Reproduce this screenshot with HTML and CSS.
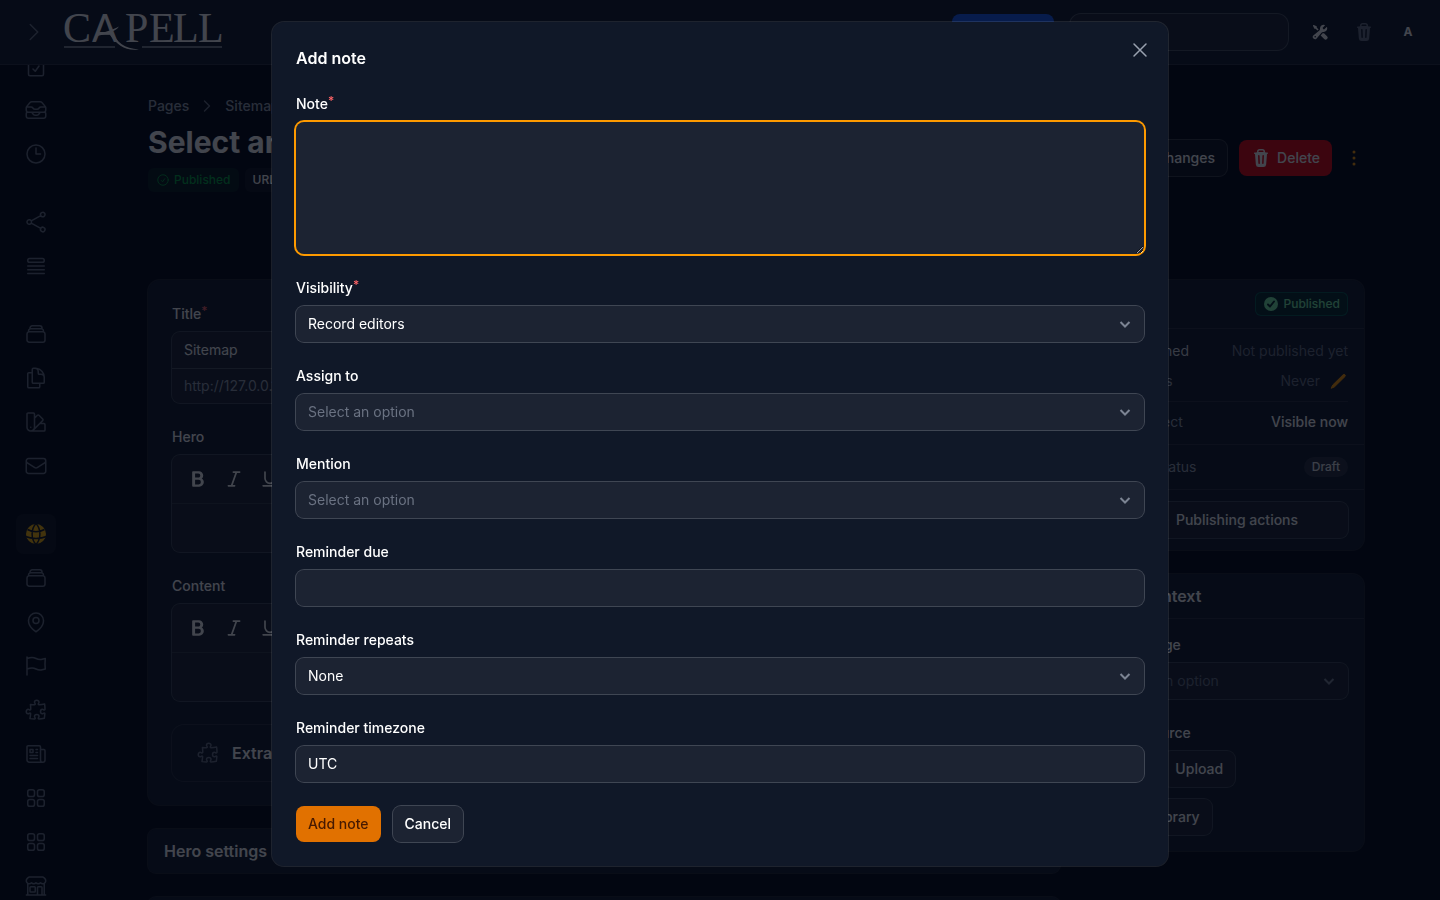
FILE: index.html
```html
<!DOCTYPE html>
<html lang="en">
<head>
<meta charset="utf-8">
<meta name="viewport" content="width=device-width, initial-scale=1">
<title>Add note - Capell</title>
<link rel="stylesheet" href="styles.css">
</head>
<body>
<svg class="sprite" aria-hidden="true">
  <symbol id="i-stack" viewBox="0 0 24 24"><path d="M6 6.878V6a2.25 2.25 0 0 1 2.25-2.25h7.5A2.25 2.25 0 0 1 18 6v.878m-12 0c.235-.083.487-.128.75-.128h10.5c.263 0 .515.045.75.128m-12 0A2.25 2.25 0 0 0 4.5 9v.878m13.5-3A2.25 2.25 0 0 1 19.5 9v.878m0 0a2.246 2.246 0 0 0-.75-.128H5.25c-.263 0-.515.045-.75.128m15 0A2.25 2.25 0 0 1 21 12v6a2.25 2.25 0 0 1-2.25 2.25H5.25A2.25 2.25 0 0 1 3 18v-6c0-.98.626-1.813 1.5-2.122"/></symbol>
  <symbol id="i-puzzle" viewBox="0 0 24 24"><path d="M14.25 6.087c0-.355.186-.676.401-.959.221-.29.349-.634.349-1.003 0-1.036-1.007-1.875-2.25-1.875s-2.25.84-2.25 1.875c0 .369.128.713.349 1.003.215.283.401.604.401.959v0a.64.64 0 0 1-.657.643 48.39 48.39 0 0 1-4.163-.3c.186 1.613.293 3.25.315 4.907a.656.656 0 0 1-.658.663v0c-.355 0-.676-.186-.959-.401a1.647 1.647 0 0 0-1.003-.349c-1.036 0-1.875 1.007-1.875 2.25s.84 2.25 1.875 2.25c.369 0 .713-.128 1.003-.349.283-.215.604-.401.959-.401v0c.31 0 .555.26.532.57a48.039 48.039 0 0 1-.642 5.056c1.518.19 3.058.309 4.616.354a.64.64 0 0 0 .657-.643v0c0-.355-.186-.676-.401-.959a1.647 1.647 0 0 1-.349-1.003c0-1.035 1.008-1.875 2.25-1.875 1.243 0 2.25.84 2.25 1.875 0 .369-.128.713-.349 1.003-.215.283-.4.604-.4.959v0c0 .333.277.599.61.58a48.1 48.1 0 0 0 5.427-.63 48.05 48.05 0 0 0 .582-4.717.532.532 0 0 0-.533-.57v0c-.355 0-.676.186-.959.401-.29.221-.634.349-1.003.349-1.035 0-1.875-1.007-1.875-2.25s.84-2.25 1.875-2.25c.37 0 .713.128 1.003.349.283.215.604.401.96.401v0a.656.656 0 0 0 .658-.663 48.422 48.422 0 0 0-.37-5.36c-1.886.342-3.81.574-5.766.689a.578.578 0 0 1-.61-.58v0Z"/></symbol>
  <symbol id="i-squares" viewBox="0 0 24 24"><rect x="3.75" y="3.75" width="6.75" height="6.75" rx="2.1"/><rect x="13.5" y="3.75" width="6.75" height="6.75" rx="2.1"/><rect x="3.75" y="13.5" width="6.75" height="6.75" rx="2.1"/><rect x="13.5" y="13.5" width="6.75" height="6.75" rx="2.1"/></symbol>
  <symbol id="i-bold" viewBox="0 0 24 24"><path d="M6.75 3.744h-.753v8.25h7.125a4.125 4.125 0 0 0 0-8.25H6.75Zm0 0v.38m0 16.122h6.747a4.5 4.5 0 0 0 0-9.001h-7.5v9h.753Zm0 0v-.37m0-15.751h6a3.75 3.75 0 1 1 0 7.5h-6m0-7.5v7.5m0 0v8.25m0-8.25h6.375a4.125 4.125 0 0 1 0 8.25H6.75m.747-15.38h4.875a3.375 3.375 0 0 1 0 6.75H7.497v-6.75Zm0 7.5h5.25a3.75 3.75 0 0 1 0 7.5h-5.25v-7.5Z"/></symbol>
  <symbol id="i-italic" viewBox="0 0 24 24"><path d="M5.248 20.246H9.05m0 0h3.696m-3.696 0 5.893-16.502m0 0h-3.697m3.697 0h3.803"/></symbol>
  <symbol id="i-underline" viewBox="0 0 24 24"><path d="M17.995 3.744v7.5a6 6 0 1 1-12 0v-7.5m-2.25 16.502h16.5"/></symbol>
  <symbol id="i-right" viewBox="0 0 24 24"><path d="m8.25 4.5 7.5 7.5-7.5 7.5"/></symbol>
  <symbol id="i-down" viewBox="0 0 16 16"><path d="m3.500 6 4.500 4.500L12.500 6"/></symbol>
  <symbol id="i-trash" viewBox="0 0 20 20"><path fill-rule="evenodd" d="M8.75 1A2.75 2.75 0 0 0 6 3.75v.443c-.795.077-1.584.176-2.365.298a.75.75 0 1 0 .23 1.482l.149-.022.841 10.518A2.75 2.75 0 0 0 7.596 19h4.807a2.75 2.75 0 0 0 2.742-2.53l.841-10.52.149.023a.75.75 0 0 0 .23-1.482A41.03 41.03 0 0 0 14 4.193V3.75A2.75 2.75 0 0 0 11.25 1h-2.5ZM10 4c.84 0 1.673.025 2.5.075V3.75c0-.69-.56-1.25-1.25-1.25h-2.5c-.69 0-1.25.56-1.25 1.25v.325C8.327 4.025 9.16 4 10 4ZM8.58 7.72a.75.75 0 0 0-1.5.06l.3 7.5a.75.75 0 1 0 1.5-.06l-.3-7.5Zm4.34.06a.75.75 0 1 0-1.5-.06l-.3 7.5a.75.75 0 1 0 1.5.06l.3-7.5Z"/></symbol>
  <symbol id="i-clock" viewBox="0 0 24 24"><path d="M12 6v6h4.5m4.5 0a9 9 0 1 1-18 0 9 9 0 0 1 18 0Z"/></symbol>
</svg>

<div class="app">
  <header class="topbar">
    <button class="topbar-toggle" type="button" aria-label="Expand sidebar"><svg class="icon"><use href="#i-right"/></svg></button>
    <a class="brand" href="#" aria-label="Capell">
      <svg class="logo" viewBox="0 0 160 40">
        <text class="logo-text" y="30"><tspan x="-1">C</tspan><tspan class="logo-a" x="28">A</tspan><tspan x="61 85 109 134">PELL</tspan></text>
        <path class="logo-mark" d="M31 24.500C38 20 47 19 55 14.500 51 20 43 21.500 31 24.500zM48 20c5 10 12 16.500 27 17.500C62 39.500 53 33 46 23z"/>
        <path class="logo-rule" d="M0 35h51M78 35h80"/>
      </svg>
    </a>
    <div class="topbar-end">
      <button class="btn btn-blue" type="button">View page</button>
      <input class="search" type="search" aria-label="Global search">
      <button class="icon-btn tools" type="button" aria-label="Tools"><svg viewBox="0 0 20 20"><path fill-rule="evenodd" d="M14.5 10a4.500 4.500 0 0 0 4.284-5.882c-.105-.324-.51-.391-.752-.15L15.340 6.660a.454.454 0 0 1-.493.11 3.010 3.010 0 0 1-1.618-1.616.455.455 0 0 1 .11-.494l2.694-2.692c.24-.241.174-.647-.15-.752a4.500 4.500 0 0 0-5.873 4.575c.055.873-.128 1.808-.8 2.368l-7.230 6.024a2.724 2.724 0 1 0 3.837 3.837l6.024-7.230c.56-.672 1.495-.855 2.368-.8.096.007.193.01.291.01ZM5 16a1 1 0 1 1-2 0 1 1 0 0 1 2 0Z"/><path d="M14.5 11.500c.173 0 .345-.007.514-.022l3.754 3.754a2.500 2.500 0 0 1-3.536 3.536l-4.410-4.410 2.172-2.607c.052-.063.147-.138.342-.196.202-.06.469-.087.777-.067.128.008.257.012.387.012ZM6 4.586l2.330 2.330a.452.452 0 0 1-.08.09L6.800 8.214 4.586 6H3.309a.5.5 0 0 1-.447-.276l-1.700-3.402a.5.5 0 0 1 .093-.577l.49-.49a.5.5 0 0 1 .577-.094l3.402 1.700A.5.5 0 0 1 6 3.310v1.277Z"/></svg></button>
      <button class="icon-btn bin" type="button" aria-label="Trash"><svg><use href="#i-trash"/></svg></button>
      <button class="icon-btn avatar" type="button">A</button>
    </div>
  </header>

  <div class="shell">
    <nav class="sidebar" aria-label="Main">
      <ul class="nav-group">
        <li><a href="#" aria-label="Tasks"><svg class="icon" viewBox="0 0 24 24"><path d="M6 4.500h12a1.500 1.500 0 0 1 1.500 1.500v14.250a1.500 1.500 0 0 1-1.500 1.500H6a1.500 1.500 0 0 1-1.500-1.500V6A1.500 1.500 0 0 1 6 4.500ZM9 15l2.250 2.250L15 12"/></svg></a></li>
        <li><a href="#" aria-label="Inbox"><svg class="icon" viewBox="0 0 24 24"><path d="m7.875 14.250 1.214 1.942a2.250 2.250 0 0 0 1.908 1.058h2.006c.776 0 1.497-.4 1.908-1.058l1.214-1.942M2.410 9h4.636a2.250 2.250 0 0 1 1.872 1.002l.164.246a2.250 2.250 0 0 0 1.872 1.002h2.092a2.250 2.250 0 0 0 1.872-1.002l.164-.246A2.250 2.250 0 0 1 16.954 9h4.636M2.410 9a2.250 2.250 0 0 0-.16.832V12a2.250 2.250 0 0 0 2.250 2.250h15A2.250 2.250 0 0 0 21.750 12V9.832c0-.287-.055-.57-.16-.832M2.410 9a2.250 2.250 0 0 1 .382-.632l3.285-3.832a2.250 2.250 0 0 1 1.708-.786h8.430c.657 0 1.281.287 1.709.786l3.284 3.832c.163.19.291.404.382.632M4.500 20.250h15A2.250 2.250 0 0 0 21.750 18v-2.625c0-.621-.504-1.125-1.125-1.125H3.375c-.621 0-1.125.504-1.125 1.125V18a2.250 2.250 0 0 0 2.250 2.250Z"/></svg></a></li>
        <li><a href="#" aria-label="History"><svg class="icon"><use href="#i-clock"/></svg></a></li>
      </ul>
      <ul class="nav-group">
        <li><a href="#" aria-label="Share"><svg class="icon" viewBox="0 0 24 24"><path d="M7.217 10.907a2.250 2.250 0 1 0 0 2.186m0-2.186c.18.324.283.696.283 1.093s-.103.77-.283 1.093m0-2.186 9.566-5.314m-9.566 7.500 9.566 5.314m0 0a2.250 2.250 0 1 0 3.935 2.186 2.250 2.250 0 0 0-3.935-2.186Zm0-12.814a2.250 2.250 0 1 0 3.933-2.185 2.250 2.250 0 0 0-3.933 2.185Z"/></svg></a></li>
        <li><a href="#" aria-label="Queue"><svg class="icon" viewBox="0 0 24 24"><path d="M3.750 12h16.500m-16.500 3.750h16.500M3.750 19.500h16.500M5.625 4.500h12.750a1.875 1.875 0 0 1 0 3.750H5.625a1.875 1.875 0 0 1 0-3.750Z"/></svg></a></li>
      </ul>
      <ul class="nav-group">
        <li><a href="#" aria-label="Collections"><svg class="icon"><use href="#i-stack"/></svg></a></li>
        <li><a href="#" aria-label="Documents"><svg class="icon" viewBox="0 0 24 24"><path d="M15.750 17.250v3.375c0 .621-.504 1.125-1.125 1.125h-9.750a1.125 1.125 0 0 1-1.125-1.125V7.875c0-.621.504-1.125 1.125-1.125H6.750a9.060 9.060 0 0 1 1.500.124m7.500 10.376h3.375c.621 0 1.125-.504 1.125-1.125V11.250c0-4.460-3.243-8.161-7.500-8.876a9.060 9.060 0 0 0-1.500-.124H9.375c-.621 0-1.125.504-1.125 1.125v3.500m7.500 10.375H9.375a1.125 1.125 0 0 1-1.125-1.125v-9.250m12 6.625v-1.875a3.375 3.375 0 0 0-3.375-3.375h-1.500a1.125 1.125 0 0 1-1.125-1.125v-1.500a3.375 3.375 0 0 0-3.375-3.375H9.750"/></svg></a></li>
        <li><a href="#" aria-label="Themes"><svg class="icon" viewBox="0 0 24 24"><path d="M4.098 19.902a3.750 3.750 0 0 0 5.304 0l6.401-6.402M6.750 21A3.750 3.750 0 0 1 3 17.250V4.125C3 3.504 3.504 3 4.125 3h5.250c.621 0 1.125.504 1.125 1.125v4.072M6.750 21a3.750 3.750 0 0 0 3.750-3.750V8.197M6.750 21h13.125c.621 0 1.125-.504 1.125-1.125v-5.250c0-.621-.504-1.125-1.125-1.125h-4.072M10.500 8.197l2.880-2.880c.438-.439 1.150-.439 1.590 0l3.712 3.713c.44.44.44 1.152 0 1.590l-2.879 2.880M6.750 17.250h.008v.008H6.750v-.008Z"/></svg></a></li>
        <li><a href="#" aria-label="Mail"><svg class="icon" viewBox="0 0 24 24"><path d="M21.750 6.750v10.500a2.250 2.250 0 0 1-2.250 2.250h-15a2.250 2.250 0 0 1-2.250-2.250V6.750m19.500 0A2.250 2.250 0 0 0 19.500 4.500h-15a2.250 2.250 0 0 0-2.250 2.250m19.500 0v.243a2.250 2.250 0 0 1-1.070 1.916l-7.500 4.615a2.250 2.250 0 0 1-2.360 0L3.320 8.910a2.250 2.250 0 0 1-1.070-1.916V6.750"/></svg></a></li>
      </ul>
      <ul class="nav-group">
        <li><a class="active" href="#" aria-label="Pages" aria-current="page"><svg class="globe" viewBox="0 0 24 24"><circle cx="12" cy="12" r="10"/><path d="M12 1.500C6.800 7 6.800 17 12 22.500M12 1.500C17.200 7 17.200 17 12 22.500M3.500 7.500c5 3 12 3 17 0M1.500 14.500c6 2.500 15 2.500 21 0"/></svg></a></li>
        <li><a href="#" aria-label="Layouts"><svg class="icon"><use href="#i-stack"/></svg></a></li>
        <li><a href="#" aria-label="Sites"><svg class="icon" viewBox="0 0 24 24"><path d="M15 10.500a3 3 0 1 1-6 0 3 3 0 0 1 6 0Z"/><path d="M19.500 10.500c0 7.142-7.500 11.250-7.500 11.250S4.500 17.642 4.500 10.500a7.500 7.500 0 1 1 15 0Z"/></svg></a></li>
        <li><a href="#" aria-label="Languages"><svg class="icon" viewBox="0 0 24 24"><path d="M3 3v1.500M3 21v-6m0 0 2.770-.693a9 9 0 0 1 6.208.682l.108.054a9 9 0 0 0 6.086.71l3.114-.732a48.524 48.524 0 0 1-.005-10.499l-3.110.732a9 9 0 0 1-6.085-.711l-.108-.054a9 9 0 0 0-6.208-.682L3 4.500M3 15V4.500"/></svg></a></li>
        <li><a href="#" aria-label="Extensions"><svg class="icon"><use href="#i-puzzle"/></svg></a></li>
        <li><a href="#" aria-label="News"><svg class="icon" viewBox="0 0 24 24"><path d="M12 7.500h1.500m-1.500 3h1.500m-7.500 3h7.500m-7.500 3h7.500m3-9h3.375c.621 0 1.125.504 1.125 1.125V18a2.250 2.250 0 0 1-2.250 2.250M16.500 7.500V18a2.250 2.250 0 0 0 2.250 2.250M16.500 7.500V4.875c0-.621-.504-1.125-1.125-1.125H4.125C3.504 3.750 3 4.254 3 4.875V18a2.250 2.250 0 0 0 2.250 2.250h13.500M6 7.500h3v3H6v-3Z"/></svg></a></li>
        <li><a href="#" aria-label="Blocks"><svg class="icon"><use href="#i-squares"/></svg></a></li>
        <li><a href="#" aria-label="Widgets"><svg class="icon"><use href="#i-squares"/></svg></a></li>
        <li><a href="#" aria-label="Store"><svg class="icon" viewBox="0 0 24 24"><path d="M13.500 21v-7.500a.75.75 0 0 1 .75-.75h3a.75.75 0 0 1 .75.75V21m-4.500 0H2.360m11.140 0H18m0 0h3.640m-1.390 0V9.349M3.750 21V9.349m0 0a3.001 3.001 0 0 0 3.750-.615A2.993 2.993 0 0 0 9.750 9.750c.896 0 1.700-.393 2.250-1.016a2.993 2.993 0 0 0 2.250 1.016c.896 0 1.700-.393 2.250-1.015a3.001 3.001 0 0 0 3.750.614m-16.500 0a3.004 3.004 0 0 1-.621-4.720l1.189-1.190A1.500 1.500 0 0 1 5.378 3h13.243a1.500 1.500 0 0 1 1.060.44l1.190 1.189a3 3 0 0 1-.621 4.720M6.750 18h3.750a.75.75 0 0 0 .75-.75V13.500a.75.75 0 0 0-.75-.75H6.750a.75.75 0 0 0-.75.75v3.750c0 .414.336.75.75.75Z"/></svg></a></li>
      </ul>
    </nav>

    <main class="page">
      <div class="page-head">
        <div>
          <nav class="crumbs" aria-label="Breadcrumb"><a href="#">Pages</a><svg class="icon"><use href="#i-right"/></svg><a href="#">Sitemap</a></nav>
          <h1>Select an</h1>
          <div class="badges">
            <span class="badge badge-live"><svg class="icon" viewBox="0 0 24 24"><path d="M9 12.750 11.250 15 15 9.750M21 12a9 9 0 1 1-18 0 9 9 0 0 1 18 0Z"/></svg>Published</span>
            <span class="badge">URL</span>
          </div>
        </div>
        <div class="page-actions">
          <button class="btn btn-outline" type="button">Save changes</button>
          <button class="btn btn-red" type="button"><svg><use href="#i-trash"/></svg>Delete</button>
          <button class="more" type="button" aria-label="More"><svg viewBox="0 0 20 20"><circle cx="10" cy="4" r="1.500"/><circle cx="10" cy="10" r="1.500"/><circle cx="10" cy="16" r="1.500"/></svg></button>
        </div>
      </div>

      <div class="columns">
        <div class="col-main">
          <section class="card card-form">
            <div class="field">
              <label for="title">Title<sup>*</sup></label>
              <div class="box title-box">
                <input id="title" value="Sitemap">
                <input class="url" aria-label="URL" value="http://127.0.0.1">
              </div>
            </div>
            <div class="field">
              <label for="hero">Hero</label>
              <div class="box editor">
                <div class="toolbar"><button type="button" aria-label="Bold"><svg class="icon"><use href="#i-bold"/></svg></button><button type="button" aria-label="Italic"><svg class="icon"><use href="#i-italic"/></svg></button><button type="button" aria-label="Underline"><svg class="icon"><use href="#i-underline"/></svg></button></div>
                <textarea id="hero" rows="1"></textarea>
              </div>
            </div>
            <div class="field">
              <label for="content">Content</label>
              <div class="box editor">
                <div class="toolbar"><button type="button" aria-label="Bold"><svg class="icon"><use href="#i-bold"/></svg></button><button type="button" aria-label="Italic"><svg class="icon"><use href="#i-italic"/></svg></button><button type="button" aria-label="Underline"><svg class="icon"><use href="#i-underline"/></svg></button></div>
                <textarea id="content" rows="1"></textarea>
              </div>
            </div>
            <div class="extra"><svg class="icon"><use href="#i-puzzle"/></svg><h2>Extra</h2></div>
          </section>
          <section class="card card-row"><h2>Hero settings</h2></section>
          <section class="card card-row"></section>
        </div>

        <aside class="col-side">
          <section class="card status">
            <div class="status-row status-top"><span class="badge badge-ok"><svg viewBox="0 0 16 16"><circle cx="8" cy="8" r="7"/><path d="m5 8.500 2 2 4-5"/></svg>Published</span></div>
            <div class="status-dates">
              <div class="status-row"><span class="key key-strong"><svg class="icon"><use href="#i-clock"/></svg>Published</span><span class="faint">Not published yet</span></div>
              <div class="status-row"><span class="key"><svg class="icon"><use href="#i-clock"/></svg>Expires</span><span class="faint never">Never<svg viewBox="0 0 20 20"><path d="M3.200 17.300 4.700 14 15.300 3.600a1.300 1.300 0 0 1 1.800 1.800L6.400 15.900z"/></svg></span></div>
            </div>
            <div class="status-row status-effect"><span>Public effect</span><strong>Visible now</strong></div>
            <div class="status-row status-draft"><span>Content status</span><span class="pill">Draft</span></div>
            <div class="status-foot"><button class="btn btn-outline" type="button"><svg class="icon"><use href="#i-clock"/></svg>Publishing actions</button></div>
          </section>
          <section class="card context">
            <h2>Page context</h2>
            <div class="context-body">
              <div class="field">
                <label for="parent">Parent page</label>
                <div class="box select"><select id="parent"><option>Select an option</option></select><svg><use href="#i-down"/></svg></div>
              </div>
              <div class="field">
                <span class="label">Image source</span>
                <div class="sources"><button class="btn btn-outline" type="button">URL</button><button class="btn btn-outline" type="button">Upload</button><button class="btn btn-outline" type="button">Media library</button></div>
              </div>
            </div>
          </section>
        </aside>
      </div>
    </main>
  </div>
</div>

<div class="overlay">
  <form class="modal" role="dialog" aria-modal="true" aria-labelledby="modal-title">
    <button class="close" type="button" aria-label="Close"><svg class="icon" viewBox="0 0 24 24"><path d="M6 18 18 6M6 6l12 12"/></svg></button>
    <h2 id="modal-title">Add note</h2>
    <div class="field">
      <label for="note">Note<sup>*</sup></label>
      <textarea id="note" class="box note"></textarea>
    </div>
    <div class="field">
      <label for="visibility">Visibility<sup>*</sup></label>
      <div class="box select"><select id="visibility"><option>Record editors</option></select><svg><use href="#i-down"/></svg></div>
    </div>
    <div class="field">
      <label for="assign">Assign to</label>
      <div class="box select empty"><select id="assign"><option>Select an option</option></select><svg><use href="#i-down"/></svg></div>
    </div>
    <div class="field">
      <label for="mention">Mention</label>
      <div class="box select empty"><select id="mention"><option>Select an option</option></select><svg><use href="#i-down"/></svg></div>
    </div>
    <div class="field">
      <label for="due">Reminder due</label>
      <input id="due" class="box" type="text">
    </div>
    <div class="field">
      <label for="repeats">Reminder repeats</label>
      <div class="box select"><select id="repeats"><option>None</option></select><svg><use href="#i-down"/></svg></div>
    </div>
    <div class="field">
      <label for="timezone">Reminder timezone</label>
      <input id="timezone" class="box" type="text" value="UTC">
    </div>
    <div class="modal-actions">
      <button class="btn btn-amber" type="submit">Add note</button>
      <button class="btn btn-outline" type="button">Cancel</button>
    </div>
  </form>
</div>
</body>
</html>
```

FILE: styles.css
```css
:root {
  color-scheme: dark;
  --bg: #030712;
  --surface: #101828;
  --line: rgba(255, 255, 255, 0.1);
  --ring: rgba(255, 255, 255, 0.2);
  --tint: rgba(255, 255, 255, 0.05);
  --muted: #99a1af;
  --faint: #6a7282;
}
*, *::before, *::after { box-sizing: border-box; }
body {
  margin: 0;
  background: var(--bg);
  color: #fff;
  font: 14px/20px Inter, sans-serif;
  overflow: hidden;
}
h1, h2, ul { margin: 0; padding: 0; }
ul { list-style: none; }
h2 { font-size: 16px; line-height: 24px; font-weight: 600; }
a { color: inherit; text-decoration: none; }
button, input, select, textarea {
  margin: 0;
  padding: 0;
  border: 0;
  background: none;
  color: inherit;
  font: inherit;
  outline: none;
}
svg { flex: none; fill: currentColor; }
.sprite { position: absolute; width: 0; height: 0; }
.icon {
  width: 24px;
  height: 24px;
  fill: none;
  stroke: currentColor;
  stroke-width: 1.5;
  stroke-linecap: round;
  stroke-linejoin: round;
}
.app { display: flex; flex-direction: column; height: 100vh; overflow: hidden; }

/* Top bar */
.topbar {
  display: flex;
  align-items: center;
  flex: none;
  height: 65px;
  padding: 0 16px 0 22px;
  background: var(--surface);
  border-bottom: 1px solid var(--line);
}
.topbar-toggle { display: flex; color: var(--faint); }
.brand { display: flex; margin-left: 18px; }
.logo { width: 160px; height: 40px; overflow: visible; }
.logo-text { font: 42px "Liberation Serif", serif; fill: #fff; }
.logo-a { font: 38px Lato, sans-serif; }
.logo-mark { fill: #fff; }
.logo-rule { stroke: var(--muted); stroke-width: 1.5; }
.topbar-end { display: flex; align-items: center; gap: 12px; margin-left: auto; }
.search {
  width: 220px;
  height: 38px;
  margin: 0 3px;
  border: 1px solid var(--ring);
  border-radius: 12px;
  background: var(--tint);
}
.icon-btn { display: grid; place-items: center; width: 32px; height: 32px; }
.icon-btn svg { width: 20px; height: 20px; }
.icon-btn.tools svg { width: 16px; height: 16px; }
.bin { color: var(--faint); }
.avatar { font-size: 12px; font-weight: 700; }

/* Buttons */
.btn {
  display: inline-flex;
  align-items: center;
  justify-content: center;
  gap: 6px;
  height: 36px;
  padding: 0 12px;
  border-radius: 8px;
  font-weight: 500;
  white-space: nowrap;
}
.btn svg { width: 20px; height: 20px; }
.btn-blue { width: 102px; background: #155dfc; }
.btn-red { background: #e7000b; }
.btn-amber { background: #e17100; color: #461901; }
.btn-outline { background: var(--tint); box-shadow: 0 0 0 1px var(--ring); }

/* Sidebar */
.shell { display: flex; flex: 1; min-height: 0; }
.sidebar {
  display: flex;
  flex-direction: column;
  gap: 28px;
  flex: none;
  width: 72px;
  padding: 0 16px;
  overflow: hidden;
}
.nav-group { display: grid; gap: 4px; }
.nav-group:first-child { margin-top: -19px; }
.nav-group a { display: grid; place-items: center; height: 40px; border-radius: 8px; color: var(--faint); }
.nav-group a.active { background: var(--tint); color: #ffb900; }
.globe { width: 24px; height: 24px; }
.globe path { fill: none; stroke: #101420; stroke-width: 1.5; }

/* Page */
.page { flex: 1; min-width: 0; max-width: 1280px; margin: 0 auto; padding: 31px 32px 0; }
.page-head { display: flex; align-items: center; justify-content: space-between; margin-bottom: 88px; }
.crumbs { display: flex; align-items: center; gap: 8px; margin-bottom: 8px; color: var(--muted); font-weight: 500; }
.crumbs .icon { width: 20px; height: 20px; stroke-width: 2; color: var(--faint); padding: 2px; }
h1 { font-size: 30px; line-height: 36px; font-weight: 700; }
.badges { display: flex; gap: 6px; margin-top: 8px; }
.badge {
  display: inline-flex;
  align-items: center;
  gap: 4px;
  height: 24px;
  padding: 0 8px;
  border-radius: 6px;
  background: var(--tint);
  font-size: 12px;
  line-height: 16px;
  font-weight: 500;
}
.badge-live { background: #06181b; color: #00a63e; }
.badge-live .icon { width: 14px; height: 14px; }
.page-actions { display: flex; align-items: center; gap: 12px; margin-top: 28px; }
.more { display: grid; place-items: center; width: 20px; height: 36px; color: #fe9a00; }
.more svg { width: 20px; height: 20px; }
.columns { display: flex; align-items: flex-start; gap: 24px; }
.col-main { display: grid; gap: 24px; flex: 1; min-width: 0; }
.col-side { display: grid; gap: 24px; flex: none; width: 280px; }
.card { background: var(--surface); border-radius: 12px; box-shadow: 0 0 0 1px var(--line); }
.card-form { display: grid; gap: 24px; padding: 24px; }
.card-row { min-height: 44px; padding: 10px 16px; border-radius: 8px; }
.extra { display: flex; align-items: center; gap: 12px; padding: 16px 24px; border-radius: 12px; box-shadow: 0 0 0 1px var(--line); }
.extra .icon { color: var(--faint); }

/* Fields */
.field { display: grid; gap: 8px; }
label, .label { font-weight: 500; }
sup { color: #ff6467; font-size: 12px; line-height: 0; vertical-align: 4px; }
.box {
  display: block;
  width: 100%;
  min-width: 0;
  border-radius: 8px;
  background: var(--tint);
  box-shadow: 0 0 0 1px var(--ring);
}
input.box { height: 36px; padding: 0 12px 2px; }
.title-box input { display: block; width: 100%; height: 35px; padding: 0 12px 2px; }
.title-box input:first-child { height: 36px; }
.title-box .url { color: var(--muted); border-top: 1px solid var(--ring); }
.toolbar { display: flex; align-items: center; gap: 4px; height: 49px; padding: 0 10px; border-bottom: 1px solid var(--line); }
.toolbar button { display: grid; place-items: center; width: 32px; height: 32px; }
.toolbar .icon { width: 20px; height: 20px; stroke-width: 2; }
.editor textarea { display: block; width: 100%; height: 48px; resize: none; }
.select { display: grid; align-items: center; height: 36px; }
.select > * { grid-area: 1 / 1; }
.select select { width: 100%; height: 36px; padding: 0 36px 0 12px; appearance: none; }
.select svg {
  justify-self: end;
  width: 16px;
  height: 16px;
  margin-right: 11px;
  fill: none;
  stroke: #7c8493;
  stroke-width: 2;
  pointer-events: none;
}
.select.empty select, .context select { color: var(--faint); }

/* Side cards */
.status-row { display: flex; align-items: center; justify-content: space-between; min-height: 20px; color: var(--muted); }
.status-top { justify-content: flex-end; padding: 12px 16px; border-bottom: 1px solid var(--line); }
.status-dates { display: grid; gap: 10px; margin: 0 16px; padding: 12px 0 10px; border-bottom: 1px solid var(--line); }
.key { display: flex; align-items: center; gap: 8px; }
.key .icon { width: 16px; height: 16px; }
.key-strong { color: #d1d5dc; }
.faint { color: var(--faint); }
.never { display: flex; align-items: center; gap: 8px; }
.never svg { width: 20px; height: 20px; color: #fe9a00; stroke: currentColor; stroke-width: 1; stroke-linejoin: round; }
.status-effect { padding: 10px 16px 12px; border-bottom: 1px solid var(--line); }
.status-effect strong { color: #fff; font-weight: 500; }
.status-draft { padding: 12px 16px; border-bottom: 1px solid var(--line); }
.pill { padding: 2px 8px; border-radius: 10px; background: var(--line); color: #e5e7eb; font-size: 12px; line-height: 16px; font-weight: 500; }
.badge-ok { background: #072a2a; box-shadow: inset 0 0 0 1px #07584e; color: #7bf1a8; }
.badge-ok svg { width: 16px; height: 16px; }
.badge-ok path { fill: none; stroke: #072a2a; stroke-width: 2; stroke-linecap: round; stroke-linejoin: round; }
.status-foot { display: grid; padding: 12px 16px; }
.context h2 { padding: 10px 16px; border-bottom: 1px solid var(--line); }
.context-body { display: grid; gap: 24px; padding: 16px; }
.sources { display: flex; flex-wrap: wrap; gap: 12px; }

/* Modal */
.overlay {
  position: fixed;
  inset: 0;
  display: grid;
  grid-template-rows: 1fr auto 3fr;
  justify-items: center;
  padding: 16px;
  background: rgba(3, 7, 18, 0.75);
  overflow: auto;
}
.modal {
  position: relative;
  grid-row: 2;
  display: grid;
  gap: 24px;
  width: 100%;
  max-width: 896px;
  padding: 24px;
  border-radius: 12px;
  background: var(--surface);
  box-shadow: 0 0 0 1px var(--line);
}
.close { position: absolute; top: 16px; right: 16px; display: flex; color: var(--muted); }
.note { height: 132px; padding: 6px 12px; resize: vertical; box-shadow: 0 0 0 2px #fe9a00; }
.modal-actions { display: flex; gap: 12px; }
```
